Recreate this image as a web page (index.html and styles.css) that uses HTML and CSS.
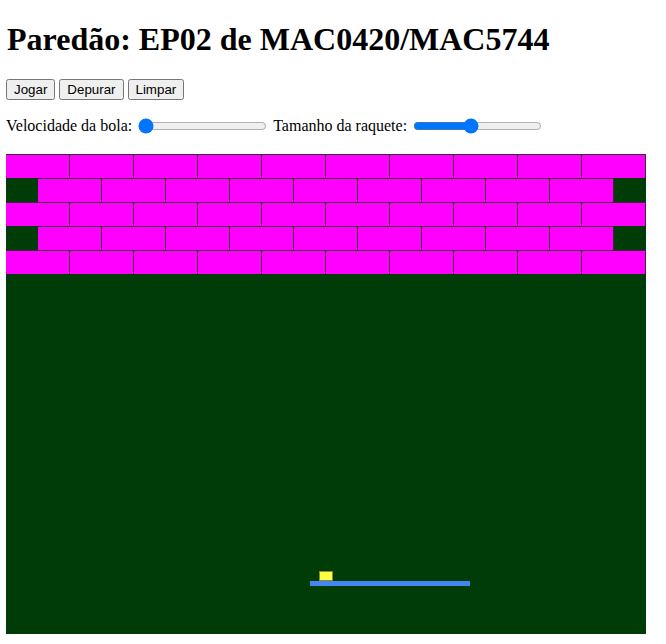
FILE: index.html
```html
<!DOCTYPE html>
<html lang="pt">
<head>
<meta charset="utf-8">
<title>Paredão</title>
<link rel="stylesheet" href="styles.css">
</head>
<body>
<h1 class="title">Paredão: EP02 de MAC0420/MAC5744</h1>
<div class="controls">
  <button class="btn">Jogar</button>
  <button class="btn">Depurar</button>
  <button class="btn">Limpar</button>
</div>
<div class="sliders">
  <label class="lbl">Velocidade da bola:</label>
  <input class="range" type="range" min="0" max="100" value="0">
  <label class="lbl">Tamanho da raquete:</label>
  <input class="range" type="range" min="0" max="100" value="44">
</div>
<div class="board">
  <div class="row">
    <div class="brick"></div><div class="brick"></div><div class="brick"></div><div class="brick"></div><div class="brick"></div><div class="brick"></div><div class="brick"></div><div class="brick"></div><div class="brick"></div><div class="brick"></div>
  </div>
  <div class="row row-offset">
    <div class="brick"></div><div class="brick"></div><div class="brick"></div><div class="brick"></div><div class="brick"></div><div class="brick"></div><div class="brick"></div><div class="brick"></div><div class="brick"></div>
  </div>
  <div class="row">
    <div class="brick"></div><div class="brick"></div><div class="brick"></div><div class="brick"></div><div class="brick"></div><div class="brick"></div><div class="brick"></div><div class="brick"></div><div class="brick"></div><div class="brick"></div>
  </div>
  <div class="row row-offset">
    <div class="brick"></div><div class="brick"></div><div class="brick"></div><div class="brick"></div><div class="brick"></div><div class="brick"></div><div class="brick"></div><div class="brick"></div><div class="brick"></div>
  </div>
  <div class="row">
    <div class="brick"></div><div class="brick"></div><div class="brick"></div><div class="brick"></div><div class="brick"></div><div class="brick"></div><div class="brick"></div><div class="brick"></div><div class="brick"></div><div class="brick"></div>
  </div>
  <div class="ball"></div>
  <div class="paddle"></div>
</div>
</body>
</html>
```

FILE: styles.css
```css
body {
  margin: 6px;
  font-family: "Liberation Serif", "Times New Roman", serif;
  font-size: 16px;
  color: #000;
  background: #fff;
}

.title {
  font-size: 32px;
  font-weight: bold;
  margin: 15px 0 21px 1px;
  line-height: 37px;
}

.controls {
  display: flex;
  gap: 4px;
  height: 21px;
  align-items: stretch;
}

.btn {
  font-family: "Liberation Sans", Arial, sans-serif;
  font-size: 13.33px;
  margin: 0;
  padding: 1px 6px;
}

.sliders {
  display: flex;
  align-items: center;
  margin-top: 16px;
  margin-bottom: 18px;
  height: 20px;
}

.lbl {
  margin-right: 4px;
}

.range {
  width: 129px;
  margin: 2px 6px 2px 2px;
}

.board {
  position: relative;
  width: 640px;
  height: 480px;
  background: #003c08;
}

.row {
  display: flex;
  height: 24px;
}

.row-offset {
  padding-left: 32px;
}

.brick {
  box-sizing: border-box;
  width: 64px;
  height: 24px;
  background: #ff00ff;
  border-top: 1px solid #3a2a3a;
  border-right: 1px solid #3a2a3a;
}

.ball {
  position: absolute;
  left: 313px;
  top: 417px;
  width: 14px;
  height: 10px;
  box-sizing: border-box;
  background: #ffff44;
  border: 1px solid #8a8a30;
}

.paddle {
  position: absolute;
  left: 304px;
  top: 427px;
  width: 160px;
  height: 5px;
  background: #4286f4;
}
```
